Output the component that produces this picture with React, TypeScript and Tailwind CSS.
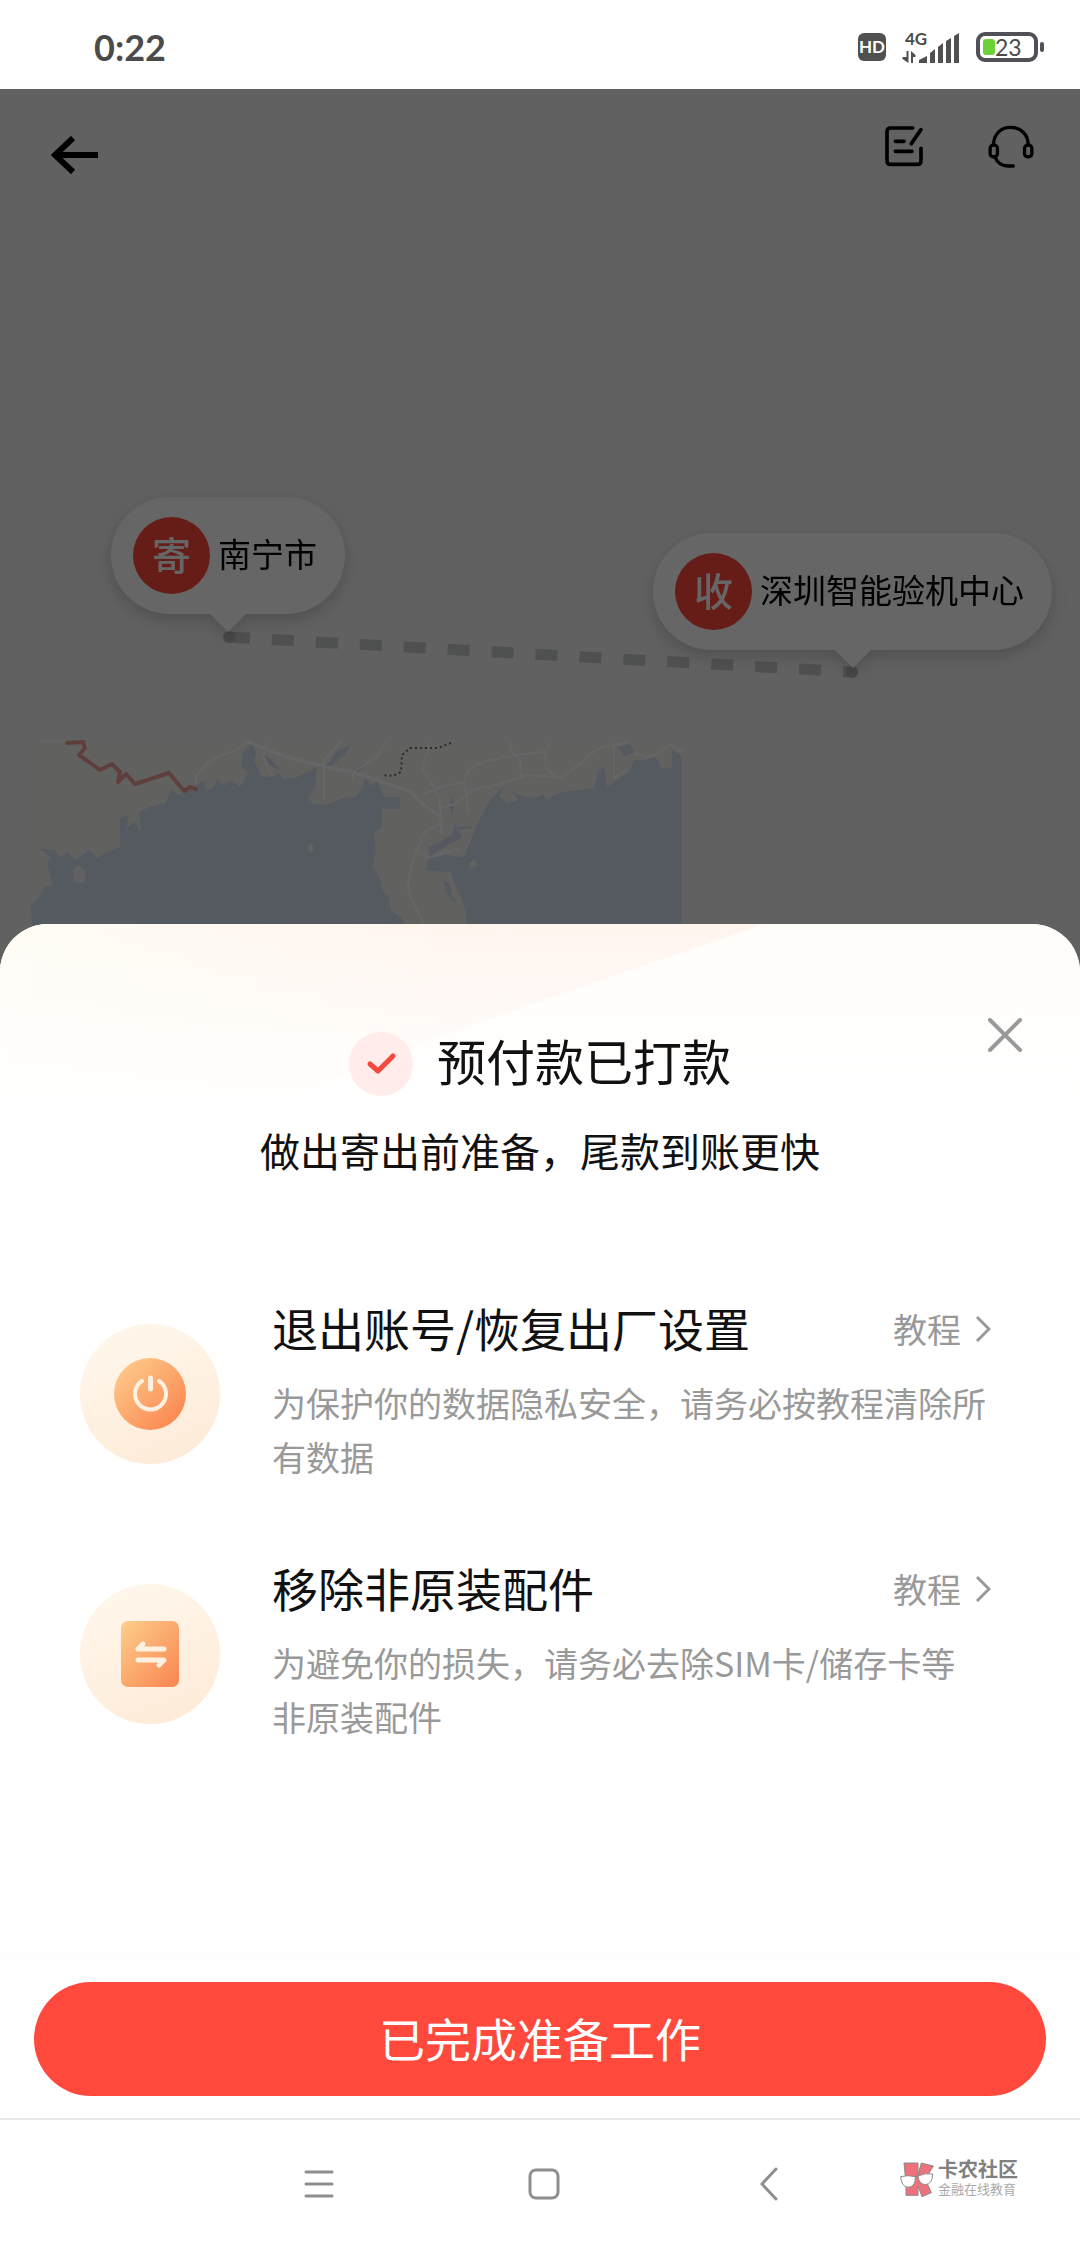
import type { ReactNode } from 'react'

interface PinProps {
  badge: string
  label: string
  className: string
}

interface StepProps {
  icon: ReactNode
  title: string
  description: string
}

const steps: StepProps[] = [
  {
    icon: <PowerIcon />,
    title: '退出账号/恢复出厂设置',
    description: '为保护你的数据隐私安全，请务必按教程清除所\n有数据',
  },
  {
    icon: <CardIcon />,
    title: '移除非原装配件',
    description: '为避免你的损失，请务必去除SIM卡/储存卡等\n非原装配件',
  },
]

function PowerIcon() {
  return (
    <svg width="140" height="140" viewBox="0 0 140 140" fill="none" aria-hidden="true">
      <defs>
        <linearGradient id="power-halo" x1="0.3" y1="0" x2="0.7" y2="1">
          <stop stopColor="#fff7ec" />
          <stop offset="1" stopColor="#feebd8" />
        </linearGradient>
        <linearGradient id="power-fill" x1="0.1" y1="0.1" x2="0.9" y2="0.9">
          <stop stopColor="#fdc98a" />
          <stop offset="1" stopColor="#fb8650" />
        </linearGradient>
      </defs>
      <circle cx="70" cy="70" r="70" fill="url(#power-halo)" />
      <circle cx="70" cy="70" r="36" fill="url(#power-fill)" />
      <path d="M62 57A15.5 15.5 0 1 0 79 57" stroke="#fff1e2" strokeWidth="4" strokeLinecap="round" />
      <path d="M70.5 54V65" stroke="#fff1e2" strokeWidth="5" strokeLinecap="round" />
    </svg>
  )
}

function CardIcon() {
  return (
    <svg width="140" height="140" viewBox="0 0 140 140" fill="none" aria-hidden="true">
      <defs>
        <linearGradient id="card-halo" x1="0.3" y1="0" x2="0.7" y2="1">
          <stop stopColor="#fff7ec" />
          <stop offset="1" stopColor="#feebd8" />
        </linearGradient>
        <linearGradient id="card-fill" x1="0" y1="0" x2="1" y2="1">
          <stop stopColor="#fdcf8c" />
          <stop offset="1" stopColor="#f98450" />
        </linearGradient>
      </defs>
      <circle cx="70" cy="70" r="70" fill="url(#card-halo)" />
      <rect x="41" y="37" width="58" height="66" rx="7" fill="url(#card-fill)" />
      <path
        d="M84 65H58L63 60M58 76H84L79 81"
        stroke="#fff1e2"
        strokeWidth="5"
        strokeLinecap="round"
        strokeLinejoin="round"
      />
    </svg>
  )
}

function StatusBar() {
  return (
    <header className="flex h-[89px] items-center justify-between bg-white pt-1 pr-9 pl-[94px] text-[#4b4b4b]">
      <time className="font-['Lato',sans-serif] text-[36px] leading-[44px] font-bold">0:22</time>
      <div className="flex items-center gap-4">
        <span className="flex size-7 items-center justify-center rounded-md bg-[#505050] font-['Lato',sans-serif] text-[17px] font-bold text-white">
          HD
        </span>
        <div className="relative">
          <svg width="58" height="32" viewBox="0 0 58 32" fill="#505050" aria-hidden="true">
            <path d="M17 32V29L25 25V32ZM28 32V22L33 18V32ZM36 32V16L41 12V32ZM44 32V10L49 7V32ZM52 32V5L57 2V32Z" />
            <path d="M4.5 20H6.5V32L0.5 28V26H4.5ZM9 32V20L13.500 24V26H11V32Z" />
          </svg>
          <span className="absolute top-0 left-[3px] font-['Lato',sans-serif] text-[17px] leading-4 font-bold">4G</span>
        </div>
        <div className="flex items-center gap-[2px]">
          <div className="flex h-[30px] w-[62px] items-center rounded-[9px] border-4 border-[#505058] pl-[3px]">
            <span className="h-4 w-3 rounded-[3px] bg-[#6ad138]" />
            <span className="font-['Lato',sans-serif] text-[23px] leading-[22px]">23</span>
          </div>
          <span className="h-[10px] w-1 rounded-full bg-[#505058]" />
        </div>
      </div>
    </header>
  )
}

function MapDrawing() {
  return (
    <svg className="absolute inset-x-0 top-0 h-auto w-full" viewBox="0 0 1080 883" fill="none" aria-hidden="true">
      <g transform="translate(0 611)">
        {/* Land */}
        <path d="M36 41H683V272H32V148L36 100Z" fill="#f3f2f0" />

        {/* Sea */}
        <path
          d="M32 272V223L31 207L37 199L45 187L53 185L47 163L51 158L38 148L55 150L60 157L67 152L75 160L89 150L98 158L105 153L120 147V118L128 115L127 128L134 122L141 132L139 112L150 107L165 103L172 90L179 95L190 90L203 80L206 90L214 88L217 78L224 86L232 80L240 87L248 73L241 66L243 53L252 43L256 52L254 60L261 76L272 77L278 72L284 79L295 78L304 74L317 67L315 87L308 98L313 104L326 105L340 99L357 96L362 88L364 77L373 86L377 80L384 97H400V109H382V127L374 133L376 150L373 167L380 178L382 190L388 196L391 210L400 217L406 224V272Z"
          fill="#d4def0"
        />
        <path
          d="M467 272V223L465 210L462 200L455 185L451 172H440L426 170L428 158L445 155L464 157L471 140L476 126L487 106L492 98L504 86L499 97L508 103L518 100L512 92L530 98L543 95L548 101L554 95L562 92L580 90L594 88L598 72L604 66L607 87L620 78L629 72L634 60L645 60L656 57L661 68H672V50L682 57V272Z"
          fill="#d4def0"
        />
        <path d="M449 106L452 97L454 104L452 118L457 127L472 126V128L459 130L462 138L450 144L440 150L430 156L428 147L440 142L452 134L455 124Z" fill="#d4def0" />
        <path d="M338 50L350 45L346 54L334 64L325 68L332 58ZM352 70L366 62L362 69L355 75ZM618 47L630 44L634 52L624 57ZM264 54L272 60L280 70L270 66Z" fill="#d4def0" />
        <path d="M444 180L450 184L452 196L458 203L452 201L446 192Z" fill="#d4def0" />
        <path d="M74 168L79 165L86 172L84 183H76L73 176ZM308 147L311 143L314 148L312 152H309ZM469 163L474 159L477 164L473 168H470Z" fill="#f3f2f0" />

        {/* Roads */}
        <g stroke="#ffffff" strokeWidth="2" strokeLinejoin="round">
          <path d="M248 42L286 57L330 68L353 72L411 92L422 103L440 117L442 133" strokeWidth="3" />
          <path d="M40 41H67M196 84L196 76L205 65L220 56L237 50L248 42M267 42L263 56L272 76" />
          <path d="M422 95L440 87L464 82L467 72L478 63L520 54L545 52L551 42M545 52L546 68L556 78" />
          <path d="M440 108L455 104L473 90L500 84L527 75L562 77L585 60L590 54L603 47L629 42" />
          <path d="M440 123L424 133L417 150L411 166L408 183L409 195L413 203L423 223M415 149L428 158L460 148" />
          <path d="M324 100V60L341 42M386 42L379 55L353 72V82M431 42L426 56L422 68L432 84L440 100V117M464 82L467 98V112" />
          <path d="M511 42V50L520 60L521 78M614 42V78L626 70M634 53L647 57L655 55L670 45L683 52" />
        </g>

        <path
          d="M67 43L83 42L85 48L79 55L100 70L112 64L120 72L118 82L126 74L135 84L169 73L184 91L190 87L196 89"
          stroke="#ee9f9a"
          strokeWidth="4"
          strokeLinejoin="round"
          strokeLinecap="round"
        />
        <path d="M451 43L438 48H410L402 55L401 72L393 76L382 75" stroke="#6b6b6b" strokeWidth="2" strokeDasharray="2 3" />
      </g>

      {/* Route between the two pins */}
      <path d="M228 548L853 583" stroke="#c6c7c9" strokeWidth="11" strokeDasharray="22 22" />
      <circle cx="229" cy="548" r="6" fill="#b4b4b4" />
      <circle cx="852" cy="583" r="6" fill="#b4b4b4" />
    </svg>
  )
}

function Pin({ badge, label, className }: PinProps) {
  return (
    <div className={`absolute drop-shadow-[0_6px_8px_rgba(0,0,0,0.18)] ${className}`}>
      <div className="flex items-center gap-2 rounded-full bg-white py-5 pr-7 pl-[22px]">
        <span className="flex size-[77px] items-center justify-center rounded-full bg-[#ff493c] pb-1 text-[39px] font-medium text-white">
          {badge}
        </span>
        <span className="pb-1 text-[33px] whitespace-nowrap text-black">{label}</span>
      </div>
      <svg className="mx-auto block" width="36" height="18" viewBox="0 0 36 18" fill="#ffffff" aria-hidden="true">
        <path d="M0 0H36L18 18Z" />
      </svg>
    </div>
  )
}

function MapView() {
  return (
    <section className="relative min-h-[883px] flex-1 overflow-hidden bg-[#f2f2f2]">
      <MapDrawing />
      <div className="relative flex items-start justify-between pt-9 pr-[45px] pl-[51px]">
        <button type="button" aria-label="返回" className="flex h-[60px] items-center">
          <svg width="48" height="38" viewBox="0 0 48 38" fill="none" stroke="#000000" strokeWidth="6">
            <path d="M22 2L4 19L22 36M4 19H47" />
          </svg>
        </button>
        <div className="flex gap-[63px]">
          <button type="button" aria-label="记录" className="flex h-[42px] items-center">
            <svg width="40" height="42" viewBox="0 0 120 126" fill="none" stroke="#000000" strokeWidth="11" strokeLinecap="round">
              <path d="M86 9H20Q9 9 9 20V107Q9 118 20 118H100Q111 118 111 107V70M34 49H60M34 79H84M111 14L82 56" />
            </svg>
          </button>
          <button type="button" aria-label="客服" className="flex h-[42px] items-center">
            <svg width="48" height="45" viewBox="0 0 144 136" fill="none" stroke="#000000" strokeWidth="10" strokeLinecap="round">
              <path d="M19 64C19 32 40 10 71 10S124 32 124 64M24 100C30 117 45 127 62 127H79" />
              <rect x="9" y="64" width="22" height="35" rx="9" />
              <rect x="113" y="64" width="22" height="35" rx="9" />
            </svg>
          </button>
        </div>
      </div>
      <Pin badge="寄" label="南宁市" className="top-[408px] left-[111px]" />
      <Pin badge="收" label="深圳智能验机中心" className="top-[444px] right-7" />
      <div className="absolute inset-0 bg-black/60" />
    </section>
  )
}

function Step({ icon, title, description }: StepProps) {
  return (
    <li className="flex items-center gap-[52px]">
      <div className="shrink-0">{icon}</div>
      <div className="flex-1">
        <div className="flex items-center justify-between">
          <h2 className="pb-2 text-[46px] leading-[46px] text-[#111111]">{title}</h2>
          <a href="#tutorial" className="flex items-center gap-[14px] pr-[9px] pb-1 text-[34px] leading-[50px] text-[#999999]">
            教程
            <svg width="16" height="28" viewBox="0 0 16 28" fill="none" stroke="#999999" strokeWidth="3" aria-hidden="true">
              <path d="M2 2L14 14L2 26" />
            </svg>
          </a>
        </div>
        <p className="mt-[18px] text-[34px] leading-[54px] whitespace-pre-line text-[#999999]">{description}</p>
      </div>
    </li>
  )
}

function PrepareSheet() {
  return (
    <section role="dialog" aria-labelledby="sheet-title" className="relative -mt-12 overflow-hidden rounded-t-[48px] bg-white">
      <svg className="absolute inset-x-0 top-0 h-[190px] w-full" viewBox="0 0 1080 190" preserveAspectRatio="none" aria-hidden="true">
        <defs>
          <linearGradient id="glow" x1="0" x2="1" y1="0" y2="0">
            <stop stopColor="#fffcf5" />
            <stop offset="0.35" stopColor="#fff8f1" />
            <stop offset="0.6" stopColor="#fff5ef" />
          </linearGradient>
          <linearGradient id="fade" x1="0" x2="0" y1="0" y2="1">
            <stop stopColor="#ffffff" stopOpacity="0" />
            <stop offset="1" stopColor="#ffffff" />
          </linearGradient>
        </defs>
        <rect width="1080" height="190" fill="#fffdfa" />
        <path d="M0 0H765L590 60L460 105L250 190H0Z" fill="url(#glow)" />
        <rect width="1080" height="190" fill="url(#fade)" />
      </svg>

      <button type="button" aria-label="关闭" className="absolute top-[94px] right-[58px]">
        <svg width="34" height="34" viewBox="0 0 34 34" fill="none" stroke="#999999" strokeWidth="4" strokeLinecap="round">
          <path d="M2 2L32 32M32 2L2 32" />
        </svg>
      </button>

      <div className="px-20 pt-[108px] pb-[216px]">
        <div className="relative mx-auto flex w-fit items-center gap-6">
          <svg width="64" height="64" viewBox="0 0 64 64" fill="none" aria-hidden="true">
            <circle cx="32" cy="32" r="32" fill="#ffeceb" />
            <path d="M21 32L29 39L44 24" stroke="#f5483e" strokeWidth="5" strokeLinecap="round" strokeLinejoin="round" />
          </svg>
          <h1 id="sheet-title" className="pb-2 text-[49px] leading-[56px] text-[#111111]">
            预付款已打款
          </h1>
        </div>
        <p className="relative mt-6 text-center text-[40px] leading-[60px] text-[#111111]">做出寄出前准备，尾款到账更快</p>
        <ul className="mt-[124px] flex flex-col gap-20">
          {steps.map((step) => (
            <Step key={step.title} {...step} />
          ))}
        </ul>
      </div>

      <footer className="relative bg-white px-[34px] py-[22px] shadow-[0_-4px_24px_rgba(0,0,0,0.02)]">
        <button type="button" className="h-[114px] w-full rounded-full bg-[#ff493c] pb-1 text-[46px] text-white">
          已完成准备工作
        </button>
      </footer>
    </section>
  )
}

function Watermark() {
  return (
    <div className="absolute top-10 right-[62px] flex items-center gap-1 font-['Liberation_Sans','Noto_Sans_CJK_SC',sans-serif]">
      <svg width="34" height="36" viewBox="0 0 102 108" aria-hidden="true">
        <g fill="#ef717b" stroke="#8a8a8a" strokeWidth="3">
          <path d="M12 3H54V38L64 3L100 12L76 52L94 92L66 104L54 72V100H18V64Z" />
        </g>
        <path d="M2 44Q24 38 46 44Q48 74 24 76Q4 74 2 44ZM54 42Q76 32 98 36Q98 66 76 68Q56 66 54 42Z" fill="#ffffff" stroke="#8a8a8a" strokeWidth="3" />
        <path d="M46 46Q50 40 54 43" fill="none" stroke="#8a8a8a" strokeWidth="4" />
      </svg>
      <div>
        <p className="text-[20px] leading-5 font-bold text-[#808080]">卡农社区</p>
        <p className="text-[13px] leading-5 text-[#aaaaaa]">金融在线教育</p>
      </div>
    </div>
  )
}

function SystemNav() {
  return (
    <nav className="relative border-t-2 border-[#e8e8e8] bg-white">
      <div className="grid h-[128px] grid-cols-3 place-items-center pr-[199px] pl-[206px]">
        <button type="button" aria-label="最近任务">
          <svg width="30" height="28" viewBox="0 0 30 28" stroke="#8e8e8e" strokeWidth="3" strokeLinecap="round">
            <path d="M2 2H28M2 14H28M2 26H28" />
          </svg>
        </button>
        <button type="button" aria-label="主屏幕">
          <svg width="32" height="32" viewBox="0 0 32 32" fill="none" stroke="#8e8e8e" strokeWidth="3">
            <rect x="2" y="2" width="28" height="28" rx="6" />
          </svg>
        </button>
        <button type="button" aria-label="后退">
          <svg width="18" height="34" viewBox="0 0 18 34" fill="none" stroke="#8e8e8e" strokeWidth="3" strokeLinecap="round">
            <path d="M16 2L2 17L16 32" />
          </svg>
        </button>
      </div>
      <Watermark />
    </nav>
  )
}

export default function App() {
  return (
    <div className="flex min-h-screen flex-col bg-white font-['Noto_Sans_CJK_SC',sans-serif]">
      <StatusBar />
      <MapView />
      <PrepareSheet />
      <SystemNav />
    </div>
  )
}
